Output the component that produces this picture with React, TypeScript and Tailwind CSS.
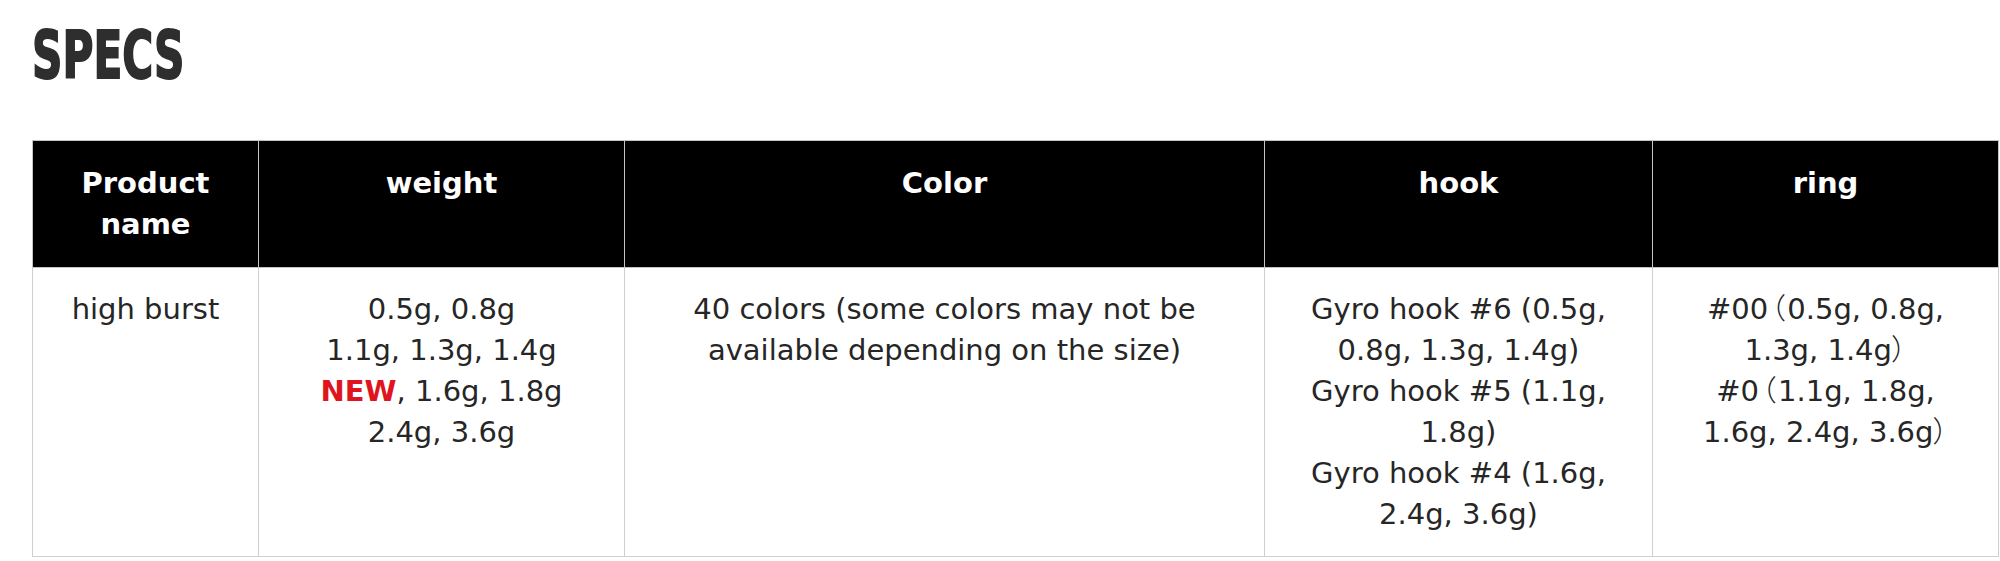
import React from 'react';

const headers = ['Product\nname', 'weight', 'Color', 'hook', 'ring'];

const widths = ['w-[226px]', 'w-[366px]', 'w-[640px]', 'w-[388px]', 'w-[346px]'];

const Lines: React.FC<{ lines: React.ReactNode[] }> = ({ lines }) => (
  <>
    {lines.map((line, i) => (
      <div key={i}>{line}</div>
    ))}
  </>
);

// full-width parens: use the CJK proportional widths so they don't take a full em
const Open = () => <span className="mx-[0.08em] font-light [font-feature-settings:'palt']">（</span>;
const Close = () => <span className="font-light [font-feature-settings:'palt']">）</span>;

export default function App() {
  const cells: React.ReactNode[] = [
    <Lines lines={['high burst']} />,
    <Lines
      lines={[
        '0.5g, 0.8g',
        '1.1g, 1.3g, 1.4g',
        <>
          <span className="font-bold text-[#e0141e]">NEW</span>, 1.6g, 1.8g
        </>,
        '2.4g, 3.6g',
      ]}
    />,
    <Lines lines={['40 colors (some colors may not be', 'available depending on the size)']} />,
    <Lines
      lines={[
        'Gyro hook #6 (0.5g,',
        '0.8g, 1.3g, 1.4g)',
        'Gyro hook #5 (1.1g,',
        '1.8g)',
        'Gyro hook #4 (1.6g,',
        '2.4g, 3.6g)',
      ]}
    />,
    <Lines
      lines={[
        <>
          #00<Open />0.5g, 0.8g,
        </>,
        <>
          1.3g, 1.4g<Close />
        </>,
        <>
          #0<Open />1.1g, 1.8g,
        </>,
        <>
          1.6g, 2.4g, 3.6g<Close />
        </>,
      ]}
    />,
  ];

  return (
    <div className="min-h-[561px] bg-white font-['DejaVu_Sans','Noto_Sans_CJK_JP',sans-serif]">
      <div className="pl-[32px] pt-[23px]">
        <h2 className="inline-block origin-left scale-x-[0.64] text-[66px] font-bold leading-none text-[#2e2e2e] [-webkit-text-stroke:2px_#2e2e2e]">
          SPECS
        </h2>
      </div>

      <table className="ml-[32px] mt-[51px] w-[1966px] table-fixed border-collapse text-center text-[29px] leading-[41px]">
        <colgroup>
          {widths.map((w, i) => (
            <col key={i} className={w} />
          ))}
        </colgroup>
        <thead>
          <tr className="bg-black text-white">
            {headers.map((h, i) => (
              <th
                key={i}
                className="whitespace-pre-line border border-[#c4c4c4] px-2 py-[22px] align-top font-bold"
              >
                {h}
              </th>
            ))}
          </tr>
        </thead>
        <tbody>
          <tr className="text-[#262626]">
            {cells.map((c, i) => (
              <td key={i} className="border border-[#cfcfcf] px-2 py-[21px] align-top">
                {c}
              </td>
            ))}
          </tr>
        </tbody>
      </table>
    </div>
  );
}
